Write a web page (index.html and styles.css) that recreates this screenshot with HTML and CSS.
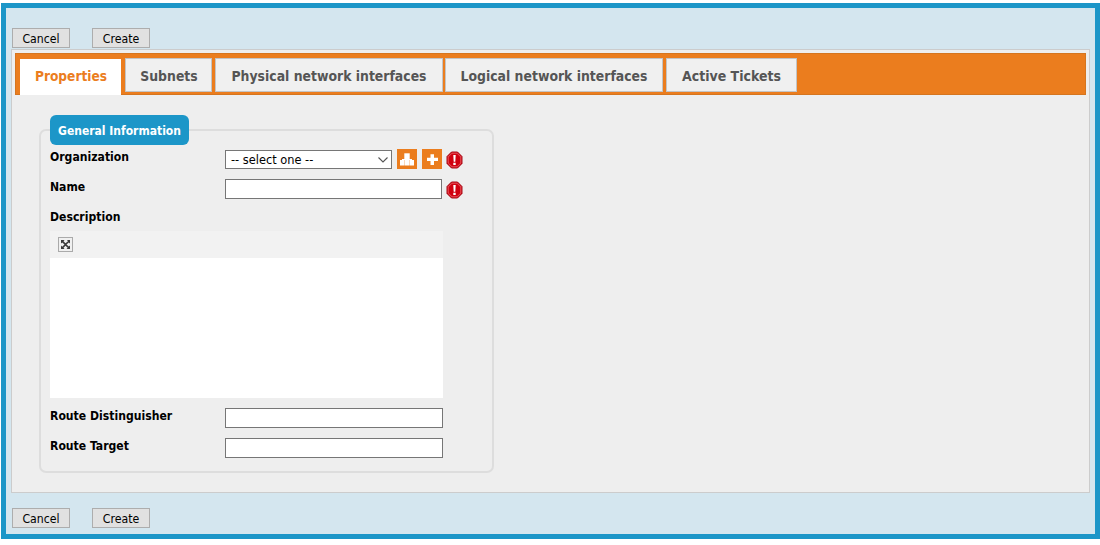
FILE: index.html
```html
<!DOCTYPE html>
<html lang="en">
<head>
<meta charset="utf-8">
<title>Create</title>
<link rel="stylesheet" href="styles.css">
</head>
<body>
<div class="frame">
  <div class="actions actions-top">
    <button class="btn">Cancel</button>
    <button class="btn">Create</button>
  </div>
  <div class="panel">
    <div class="tabbar">
      <div class="tab tab-active">Properties</div>
      <div class="tab tab-1">Subnets</div>
      <div class="tab tab-2">Physical network interfaces</div>
      <div class="tab tab-3">Logical network interfaces</div>
      <div class="tab tab-4">Active Tickets</div>
    </div>
    <div class="fieldset">
      <div class="legend">General Information</div>
      <div class="row">
        <label class="label">Organization</label>
        <div class="selectbox"><span>-- select one --</span>
          <svg class="chev" width="10" height="6" viewBox="0 0 10 6"><path d="M.5.5 5 5 9.500.5" fill="none" stroke="#555" stroke-width="1.100"/></svg>
        </div>
        <span class="iconbtn iconbtn-first">
          <svg width="20" height="20" viewBox="0 0 20 20"><path fill="#fff" d="M7.300 4.300h5.400V10H7.300z"/><path fill="#fff" d="M3 11h4.500v5.600H3zM7.800 11h4.400v5.600H7.800zM12.500 11H17v5.600h-4.500z"/><path fill="#fff" d="M5 10h10v1H5z"/></svg>
        </span>
        <span class="iconbtn">
          <svg width="20" height="20" viewBox="0 0 20 20"><path fill="#fff" d="M8.500 5.300h3.500v3.500H16v3.300h-4V16H8.500v-3.900H5V8.800h3.500z"/></svg>
        </span>
        <svg class="err" width="18" height="18" viewBox="0 0 18 18"><use href="#err"/></svg>
      </div>
      <div class="row">
        <label class="label">Name</label>
        <input class="field field-name" type="text">
        <svg class="err" width="18" height="18" viewBox="0 0 18 18"><use href="#err"/></svg>
      </div>
      <div class="row row-desc">
        <label class="label">Description</label>
      </div>
      <div class="editor">
        <div class="toolbar">
          <span class="tool">
            <svg width="13" height="13" viewBox="0 0 13 13"><path fill="#3a3a3a" d="M2 2h3.500L4.500 3.200 6.500 5.200 9 3.200 8 2h3v3.500L9.800 4.500 7.500 6.500l2.300 2L11 7.500V11H7.500l1.200-1.200-2.200-2-2 2L5.500 11H2V7.500l1.200 1.200 2.300-2.200-2.300-2L2 5.500z"/></svg>
          </span>
        </div>
        <div class="editor-body"></div>
      </div>
      <div class="row row-route">
        <label class="label">Route Distinguisher</label>
        <input class="field" type="text">
      </div>
      <div class="row">
        <label class="label">Route Target</label>
        <input class="field" type="text">
      </div>
    </div>
  </div>
  <div class="actions actions-bottom">
    <button class="btn">Cancel</button>
    <button class="btn">Create</button>
  </div>
</div>
<svg class="defs" width="0" height="0">
  <defs>
    <g id="err">
      <path fill="#d0000f" stroke="#a30a16" d="M5.500 1h6L16 5.500v7L11.500 17h-6L1 12.500v-7z"/>
      <path fill="none" stroke="#ee6a70" stroke-width=".8" d="M6 2.200h5L14.800 6v6L11 15.800H6L2.200 12V6z"/>
      <path fill="#fff" d="M7.300 4h2.400l-.4 6.800H7.700zM7.300 11.800h2.400V14H7.300z"/>
    </g>
  </defs>
</svg>
</body>
</html>
```
FILE: styles.css
```css
* { box-sizing: border-box; }
html, body { margin: 0; padding: 0; background: #fff; }
body { font-family: "DejaVu Sans", sans-serif; font-size: 12px; color: #000; overflow: hidden; }
.defs { position: absolute; }
.frame {
  margin: 3px 0 0 1px;
  width: 1099px;
  height: 536px;
  border: 5px solid #1c96c8;
  background: #d4e6ef;
  padding: 0 5px;
  display: flex;
  flex-direction: column;
}
.actions { display: flex; gap: 22px; padding-left: 1px; }
.actions-top { margin-top: 20px; height: 21px; }
.actions-bottom { margin-top: 15px; }
.btn {
  width: 58px;
  height: 20px;
  padding: 2px 0 0;
  border: 1px solid #adadad;
  background: #e1e1e1;
  color: #000;
  font: 12.200px "DejaVu Sans Condensed", "DejaVu Sans", sans-serif;
}
.panel {
  height: 444px;
  border: 1px solid #ccc;
  background: #eee;
  padding: 3px 3px 0;
}
.tabbar {
  height: 42px;
  background: #eb7d1e;
  border: 1px solid #d5751f;
  padding: 4px 0 0 4px;
  display: flex;
  align-items: flex-start;
}
.tab {
  height: 34px;
  margin-right: 3px;
  padding-top: 1px;
  border: 1px solid #c4c4c4;
  background: #f0f0f0;
  color: #555;
  font-size: 13.850px;
  font-weight: bold;
  font-family: "DejaVu Sans Condensed", "DejaVu Sans", sans-serif;
  display: flex;
  align-items: center;
  justify-content: center;
}
.tab-active {
  width: 101px;
  height: 36px;
  margin-top: 1px;
  margin-right: 4px;
  padding: 0 0 2px 1px;
  border: 0;
  background: #fff;
  color: #eb7d1e;
  font-size: 13.600px;
}
.tab-1 { width: 87px; padding-left: 1px; }
.tab-2 { width: 228px; margin-right: 2px; }
.tab-3 { width: 218px; }
.tab-4 { width: 131px; font-size: 14px; }
.fieldset {
  width: 455px;
  height: 344px;
  margin: 34px 0 0 24px;
  border: 2px solid #ddd;
  border-radius: 7px;
  padding: 0 0 0 9px;
}
.legend {
  width: 139px;
  height: 30px;
  margin-top: -16px;
  margin-bottom: 4px;
  padding-top: 1px;
  background: #1c96c8;
  border-radius: 6px;
  color: #fff;
  font-weight: bold;
  font-family: "DejaVu Sans Condensed", "DejaVu Sans", sans-serif;
  font-size: 12px;
  display: flex;
  align-items: center;
  justify-content: center;
}
.row {
  height: 30px;
  display: flex;
  align-items: flex-start;
}
.label {
  width: 175px;
  flex: none;
  font-weight: bold;
  font-family: "DejaVu Sans Condensed", "DejaVu Sans", sans-serif;
  font-size: 12.100px;
  line-height: 17px;
}
.selectbox {
  width: 167px;
  height: 19px;
  margin-top: 1px;
  border: 1px solid #767676;
  background: #fff;
  padding-left: 5px;
  display: flex;
  align-items: center;
  justify-content: space-between;
  font-size: 11.400px;
}
.chev { margin-right: 3px; }
.iconbtn {
  width: 20px;
  height: 20px;
  margin-left: 5px;
  background: #eb7d1e;
  display: block;
}
.iconbtn svg { display: block; }
.err { margin: 2px 0 0 4px; flex: none; }
.field {
  width: 218px;
  height: 20px;
  margin: 0;
  border: 1px solid #767676;
  background: #fff;
  padding: 0;
}
.field-name { width: 217px; }
.row-desc { height: 22px; }
.editor { width: 393px; height: 167px; background: #fff; }
.toolbar { height: 27px; background: #f2f2f2; padding: 6px 0 0 8px; }
.tool {
  width: 15px;
  height: 15px;
  display: block;
  background: #f0f0f0;
  border: 1px solid #aaa;
}
.tool svg { display: block; }
.row-route { margin-top: 10px; }
```
